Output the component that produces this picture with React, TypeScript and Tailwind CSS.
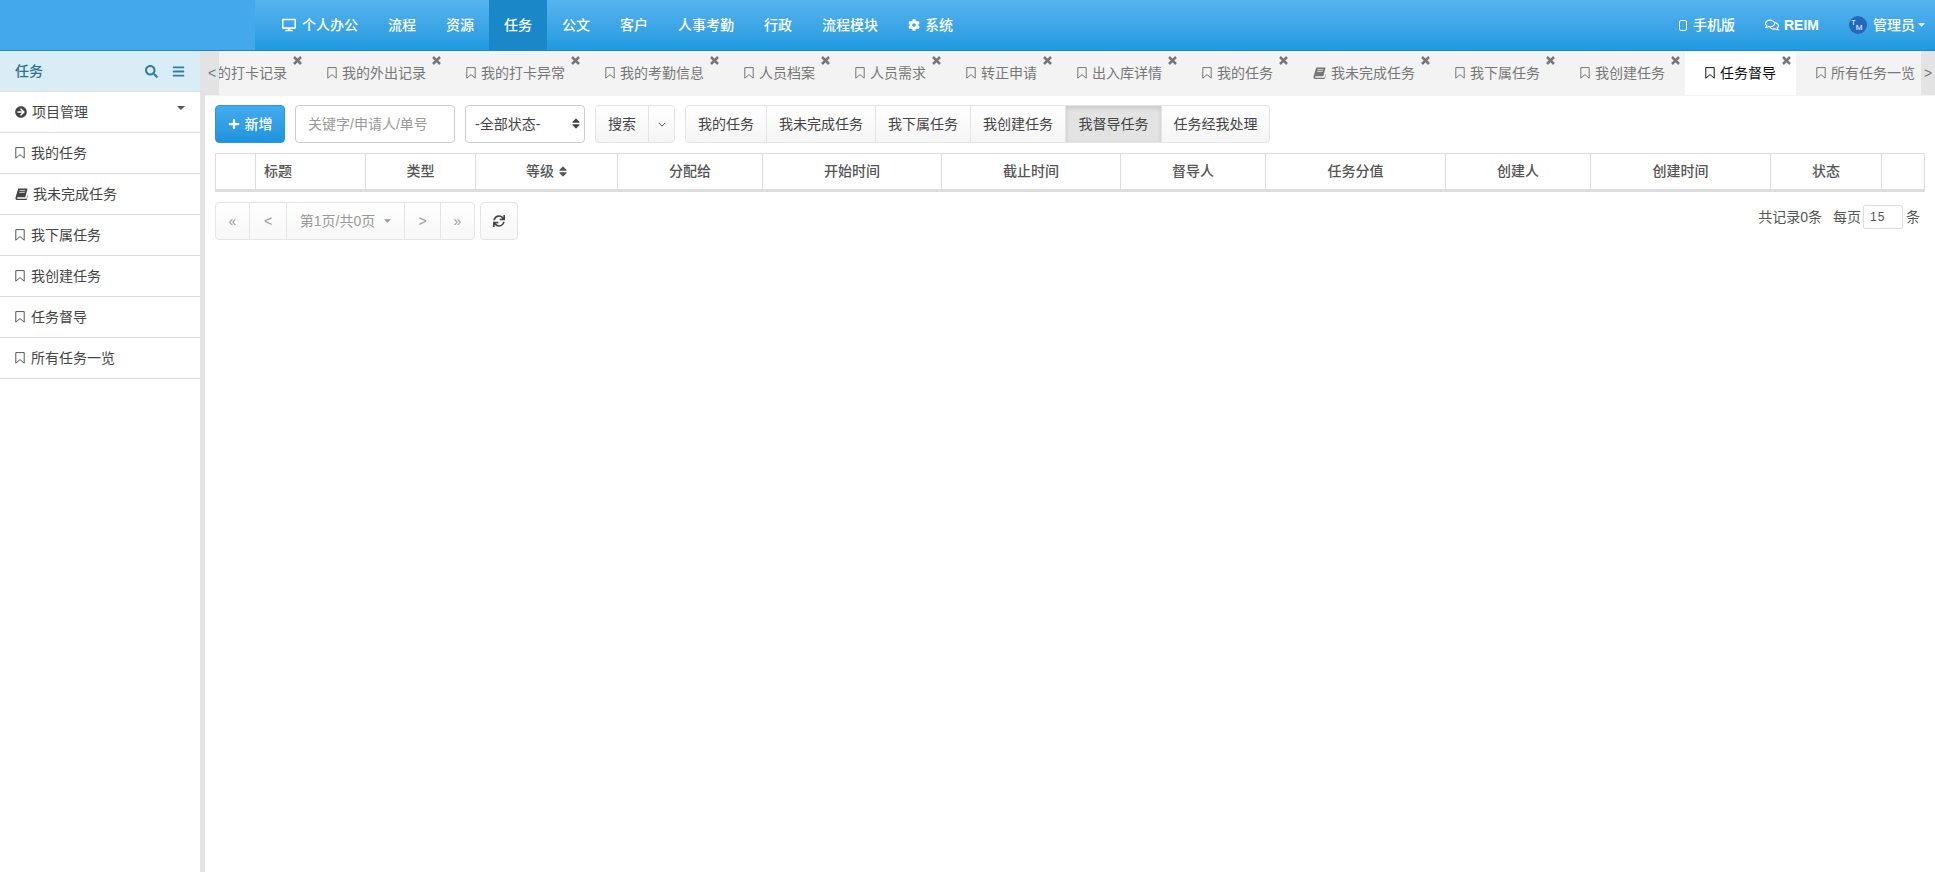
import React from "react";
import {
  FaArrowCircleRight,
  FaBars,
  FaCog,
  FaDesktop,
  FaPlus,
  FaRegComments,
  FaSearch,
  FaSort,
  FaSync,
} from "react-icons/fa";

const navItems = ["流程", "资源", "任务", "公文", "客户", "人事考勤", "行政", "流程模块"];

const tabs = [
  "我的打卡记录",
  "我的外出记录",
  "我的打卡异常",
  "我的考勤信息",
  "人员档案",
  "人员需求",
  "转正申请",
  "出入库详情",
  "我的任务",
  "我未完成任务",
  "我下属任务",
  "我创建任务",
  "任务督导",
  "所有任务一览",
];

const sideItems = ["我的任务", "我未完成任务", "我下属任务", "我创建任务", "任务督导", "所有任务一览"];

const filters = ["我的任务", "我未完成任务", "我下属任务", "我创建任务", "我督导任务", "任务经我处理"];

const filterWidths = ["w-[81px]", "w-[109px]", "w-[95px]", "w-[95px]", "w-[96px]", "w-[107px]"];

const columns = [
  { title: "", width: "w-[40px]" },
  { title: "标题", width: "w-[110px]", left: true },
  { title: "类型", width: "w-[110px]" },
  { title: "等级", width: "w-[142px]", sort: true },
  { title: "分配给", width: "w-[145px]" },
  { title: "开始时间", width: "w-[179px]" },
  { title: "截止时间", width: "w-[179px]" },
  { title: "督导人", width: "w-[145px]" },
  { title: "任务分值", width: "w-[180px]" },
  { title: "创建人", width: "w-[145px]" },
  { title: "创建时间", width: "w-[180px]" },
  { title: "状态", width: "w-[111px]" },
  { title: "", width: "flex-1" },
];

const pagerBtn =
  "flex items-center justify-center h-full border-r border-[#e5e5e5] text-[#999] text-[14px]";

function BookmarkIcon({ className }: { className: string }) {
  return (
    <svg viewBox="0 0 10 12" className={className} fill="none" stroke="currentColor" strokeWidth="1">
      <path d="M.8.6h8.4v10.6L5 7.6.8 11.2z" />
    </svg>
  );
}

function BookIcon({ className }: { className: string }) {
  return (
    <svg viewBox="0 0 13 12" className={className} fill="currentColor">
      <path d="M3.2.4h9.4l-2.3 8.8H3c-1.3 0-1.3 1.5 0 1.5h8.6l1-3.8.4.4-1.3 4.6H2.2C.6 12 .2 10.4.6 9.2z" />
      <path d="M4.6 2.6h5.6M4.2 4.4h5.6" stroke="#fff" strokeWidth=".7" />
    </svg>
  );
}

function CloseIcon({ className }: { className: string }) {
  return (
    <svg viewBox="0 0 9 9" className={className} fill="none" stroke="currentColor" strokeWidth="2.5">
      <path d="M1 1l7 7M8 1L1 8" />
    </svg>
  );
}

function Caret({ className }: { className: string }) {
  return (
    <svg viewBox="0 0 8 4" className={className} fill="currentColor">
      <path d="M0 0h8L4 4z" />
    </svg>
  );
}

export default function App() {
  return (
    <div className="h-screen overflow-hidden flex flex-col bg-white text-[14px] text-[#555] font-['Liberation_Sans','Noto_Sans_CJK_SC',sans-serif]">
      {/* TOP NAV */}
      <header className="h-[51px] flex shrink-0 border-b border-[#1a87c9] text-white font-medium">
        <div className="w-[255px] bg-[#44a9ec]" />
        <div className="flex-1 flex pl-3 pr-[10px] bg-gradient-to-b from-[#56b3ee] to-[#1e9ae0]">
          <div className="flex items-center h-full px-[15px] gap-[6px]">
            <FaDesktop className="w-[14px] h-[14px]" />
            <span>个人办公</span>
          </div>
          {navItems.map((n) => (
            <div
              key={n}
              className={`flex items-center h-full px-[15px] ${n === "任务" ? "bg-[#1a87c9]" : ""}`}
            >
              {n}
            </div>
          ))}
          <div className="flex items-center h-full px-[15px] gap-[5px]">
            <FaCog className="w-[12px] h-[12px]" />
            <span>系统</span>
          </div>
          <div className="ml-auto flex items-center h-full">
            <span className="w-[8px] h-[11px] border border-white rounded-[2px] mr-[6px]" />
            <span className="mr-[30px]">手机版</span>
            <FaRegComments className="w-[14px] h-[14px] mr-[5px]" />
            <span className="mr-[30px] font-bold">REIM</span>
            <svg viewBox="0 0 20 20" className="w-[18px] h-[18px] mr-[6px]">
              <circle cx="10" cy="10" r="10" fill="#2467bb" />
              <text x="2.5" y="10" fontSize="8" fill="#fff" fontFamily="Liberation Sans">T</text>
              <text x="7.5" y="15.5" fontSize="9" fill="#fff" fontFamily="Liberation Sans">M</text>
            </svg>
            <span>管理员</span>
            <Caret className="w-[7px] h-[4px] ml-[3px]" />
          </div>
        </div>
      </header>

      <div className="flex-1 flex min-h-0">
        {/* SIDEBAR */}
        <aside className="w-[205px] shrink-0 border-r-[5px] border-[#e3e3e3]">
          <div className="h-[41px] flex items-center pl-[15px] pr-[15px] bg-[#d9edf7] text-[#31708f] border-b border-[#e0e0e0] font-medium">
            <span>任务</span>
            <FaSearch className="ml-auto w-[13px] h-[13px] text-[#2f7fa8]" />
            <FaBars className="ml-[14px] w-[13px] h-[13px] text-[#2f7fa8]" />
          </div>
          <div className="h-[41px] flex items-center pl-[15px] pr-[15px] border-b border-[#ddd] text-[#444]">
            <FaArrowCircleRight className="w-[12px] h-[12px] mr-[5px] text-[#444]" />
            <span>项目管理</span>
            <Caret className="ml-auto mb-[8px] w-[8px] h-[4px] text-[#555]" />
          </div>
          {sideItems.map((s) => (
            <div key={s} className="h-[41px] flex items-center pl-[15px] border-b border-[#ddd] text-[#444]">
              {s === "我未完成任务" ? (
                <BookIcon className="w-[13px] h-[12px] mr-[5px] text-[#444]" />
              ) : (
                <BookmarkIcon className="w-[10px] h-[12px] mr-[6px] text-[#555]" />
              )}
              <span>{s}</span>
            </div>
          ))}
        </aside>

        <main className="flex-1 min-w-0">
          {/* TABS */}
          <div className="h-[45px] flex bg-[#f3f3f3]">
            <div className="w-[14px] h-[44px] shrink-0 bg-[#e3e3e3] flex items-center justify-center text-[#777]">&lt;</div>
            <div className="flex-1 min-w-0 overflow-hidden">
              <div className="flex w-max -ml-[51px]">
                {tabs.map((t) => (
                  <div
                    key={t}
                    className={`relative h-[44px] flex items-center px-[20px] ${
                      t === "任务督导" ? "bg-white text-[#111]" : "text-[#777]"
                    }`}
                  >
                    {t === "我未完成任务" ? (
                      <BookIcon className="w-[13px] h-[12px] mr-[5px]" />
                    ) : (
                      <BookmarkIcon className="w-[10px] h-[12px] mr-[5px]" />
                    )}
                    <span>{t}</span>
                    <CloseIcon className="absolute top-[5px] right-[5px] w-[9px] h-[9px] text-[#777]" />
                  </div>
                ))}
              </div>
            </div>
            <div className="w-[14px] h-[44px] shrink-0 bg-[#e3e3e3] flex items-center justify-center text-[#777]">&gt;</div>
          </div>

          <div className="pl-[10px] pr-[10px]">
            {/* TOOLBAR */}
            <div className="flex items-center h-[38px] mt-[9px]">
              <button className="w-[70px] h-full flex items-center justify-center gap-[5px] rounded-[4px] border border-[#2a96db] bg-gradient-to-b from-[#42abee] to-[#1d94dd] text-white font-medium">
                <FaPlus className="w-[12px] h-[12px]" />
                新增
              </button>
              <div className="w-[160px] h-full ml-[10px] flex items-center pl-[12px] rounded-[4px] border border-[#ccc] text-[#999]">
                关键字/申请人/单号
              </div>
              <div className="relative w-[120px] h-full ml-[10px] flex items-center pl-[9px] rounded-[4px] border border-[#ccc] text-[#444]">
                -全部状态-
                <FaSort className="absolute right-[4px] top-[11px] w-[8px] h-[13px] text-[#444]" />
              </div>
              <div className="w-[80px] h-full ml-[10px] flex rounded-[4px] border border-[#e5e5e5] bg-gradient-to-b from-white to-[#f5f5f5] text-[#444]">
                <div className="w-[53px] flex items-center justify-center border-r border-[#e5e5e5]">搜索</div>
                <div className="flex-1 flex items-center justify-center">
                  <svg viewBox="0 0 10 6" className="w-[8px] h-[5px]" fill="none" stroke="#444" strokeWidth="1.2">
                    <path d="M1 1l4 4 4-4" />
                  </svg>
                </div>
              </div>
              <div className="h-full ml-[10px] flex rounded-[4px] border border-[#e5e5e5] bg-gradient-to-b from-white to-[#f5f5f5] text-[#444] overflow-hidden">
                {filters.map((f, i) => (
                  <div
                    key={f}
                    className={`${filterWidths[i]} flex items-center justify-center border-r border-[#e5e5e5] last:border-r-0 ${
                      f === "我督导任务" ? "bg-[#e3e3e3] shadow-[inset_0_2px_4px_rgba(0,0,0,0.125)]" : ""
                    }`}
                  >
                    {f}
                  </div>
                ))}
              </div>
            </div>

            {/* TABLE HEAD */}
            <div className="flex h-[39px] mt-[10px] border border-[#ddd] border-b-[3px] font-medium text-[#555]">
              {columns.map((c, i) => (
                <div
                  key={i}
                  className={`${c.width} flex items-center gap-[5px] border-r border-[#ddd] last:border-r-0 ${
                    c.left ? "pl-[8px]" : "justify-center"
                  }`}
                >
                  {c.title}
                  {c.sort && <FaSort className="w-[8px] h-[13px] text-[#555]" />}
                </div>
              ))}
            </div>

            {/* PAGER */}
            <div className="flex items-start h-[38px] mt-[10px]">
              <div className="h-full flex rounded-[4px] border border-[#e5e5e5] bg-gradient-to-b from-white to-[#f7f7f7]">
                <div className={`${pagerBtn} w-[34px]`}>«</div>
                <div className={`${pagerBtn} w-[37px]`}>&lt;</div>
                <div className={`${pagerBtn} w-[118px] gap-[9px]`}>
                  第1页/共0页
                  <Caret className="w-[7px] h-[4px]" />
                </div>
                <div className={`${pagerBtn} w-[36px]`}>&gt;</div>
                <div className="flex items-center justify-center h-full w-[33px] text-[#999]">»</div>
              </div>
              <div className="w-[38px] h-full ml-[5px] flex items-center justify-center rounded-[4px] border border-[#e5e5e5] bg-gradient-to-b from-white to-[#f7f7f7]">
                <FaSync className="w-[12px] h-[12px] text-[#444]" />
              </div>
              <div className="ml-auto mt-[3px] flex items-center pr-[5px] text-[#555]">
                <span>共记录0条</span>
                <span className="ml-[11px]">每页</span>
                <div className="w-[40px] h-[24px] ml-[2px] flex items-center pl-[6px] border border-[#ddd] rounded-[2px] text-[12px] tracking-[1px]">15</div>
                <span className="ml-[3px]">条</span>
              </div>
            </div>
          </div>
        </main>
      </div>
    </div>
  );
}
